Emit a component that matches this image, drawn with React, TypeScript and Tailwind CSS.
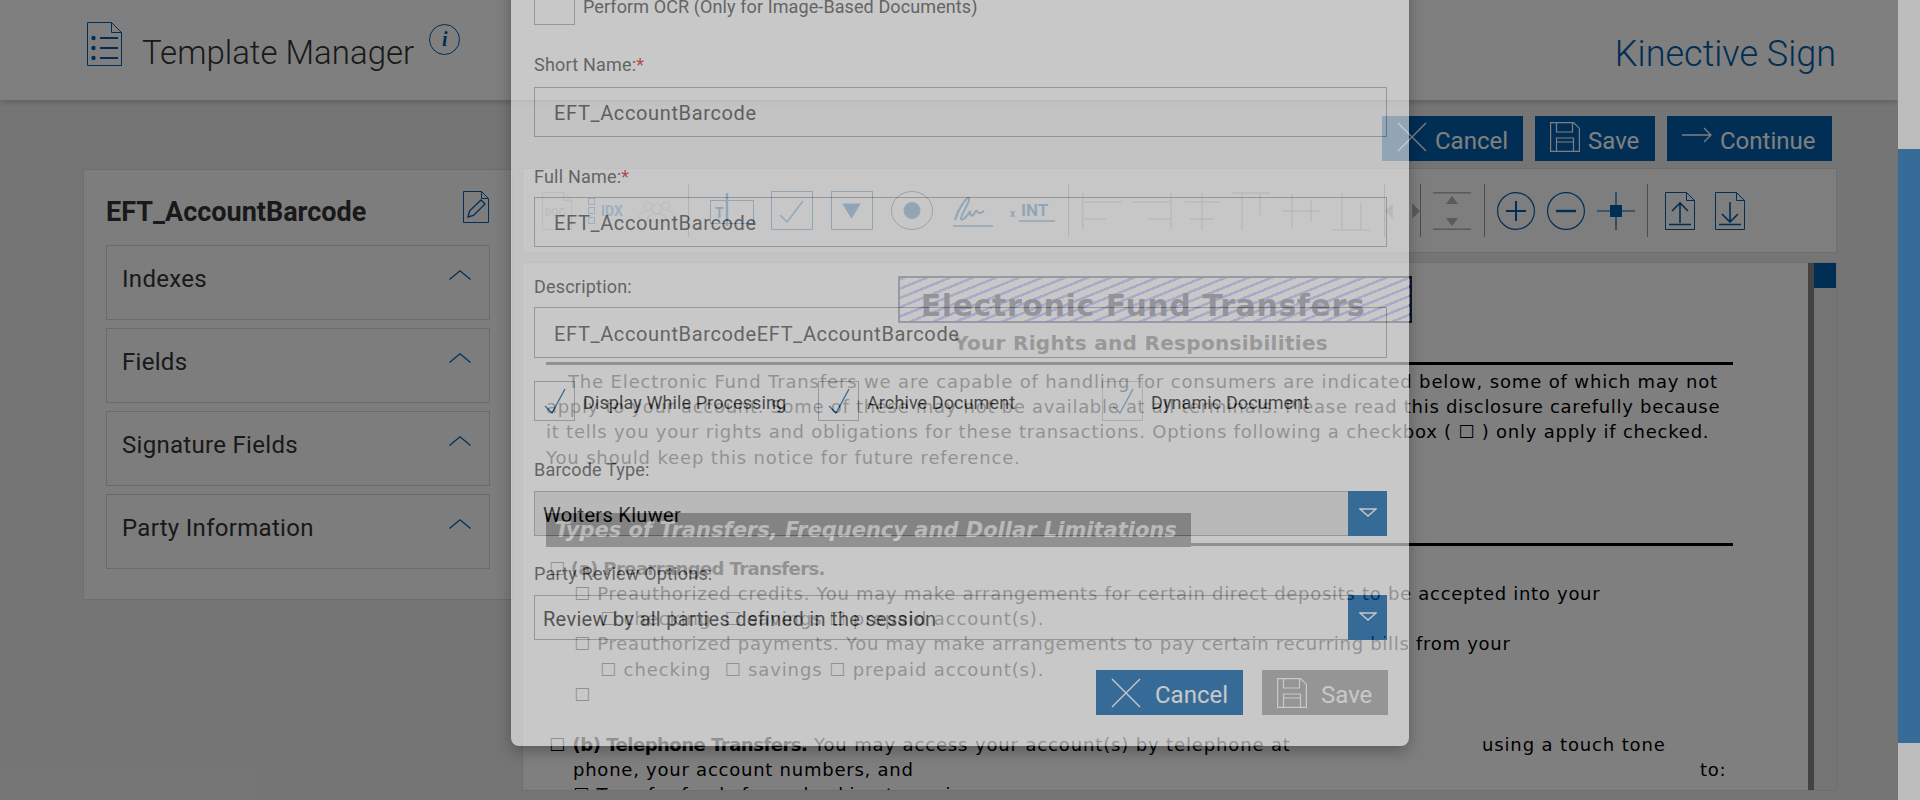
import type { ReactNode } from 'react'

const NAVY = '#005cab'

function IconX({ className }: { className?: string }) {
  return (
    <svg viewBox="0 0 30 30" className={className} fill="none" stroke="currentColor" strokeWidth="1.4">
      <path d="M1 1l28 28M29 1L1 29" />
    </svg>
  )
}

function IconSave({ className }: { className?: string }) {
  return (
    <svg viewBox="0 0 30 30" className={className} fill="none" stroke="currentColor" strokeWidth="1.2">
      <path d="M.6.6h23l5.8 5.8v23H.6z" />
      <path d="M6.5.6v9.4h16V.6M6.5 29.4V16h17v13.4M6.5 20h17" />
    </svg>
  )
}

function Chevron() {
  return (
    <svg viewBox="0 0 22 10" className="w-[22px] h-[10px]" fill="none" stroke={NAVY} strokeWidth="1.2">
      <path d="M.5 9.5L11 .8l10.5 8.7" />
    </svg>
  )
}

function Caret() {
  return (
    <svg viewBox="0 0 18 9" className="w-[18px] h-[9px] mb-[2px]" fill="none" stroke="#fff" strokeWidth="1.4">
      <path d="M1 1h16L9 8z" />
    </svg>
  )
}

function Sep() {
  return <div className="w-px h-[53px] bg-[#9a9a9a] shrink-0" />
}

function AlignIcon({ d }: { d: string }) {
  return (
    <svg viewBox="0 0 40 40" className="w-[40px] h-[40px] shrink-0" fill="none" stroke="#bdbdbd" strokeWidth="1.5">
      <path d={d} />
    </svg>
  )
}

function Toolbar() {
  return (
    <div className="h-[85px] border border-[#dcdcdc] bg-[#fdfdfd] flex items-center pl-[19px] shrink-0">
      {/* doc, index and party icons */}
      <svg viewBox="0 0 30 38" className="w-[30px] h-[38px] shrink-0" fill="none" stroke="#c9c9c9" strokeWidth="1">
        <path d="M.5.5h21l8 8v29H.5zM21.5.5v8h8" />
        <text x="3" y="24" fontSize="10" fontWeight="700" fill="#c9c9c9" stroke="none" fontFamily="Roboto">DOC</text>
      </svg>
      <svg viewBox="0 0 38 26" className="w-[38px] h-[26px] ml-[16px] shrink-0" fill="none" stroke="#3f86c8" strokeWidth="1">
        <rect x=".5" y=".5" width="6" height="6" />
        <rect x=".5" y="9.5" width="6" height="6" />
        <rect x=".5" y="19.5" width="6" height="6" />
        <text x="13" y="18" fontSize="14" fontWeight="700" fill="#3f86c8" stroke="none" fontFamily="Roboto">IDX</text>
      </svg>
      <svg viewBox="0 0 38 22" className="w-[38px] h-[22px] ml-[12px] shrink-0" fill="none" stroke="#c9c9c9" strokeWidth="1.2">
        <circle cx="10" cy="6" r="4" />
        <circle cx="28" cy="6" r="4" />
        <circle cx="19" cy="9" r="5" />
        <path d="M1 18c0-5 4-7 8-7M37 18c0-5-4-7-8-7M9 21c0-5 4-7 10-7s10 2 10 7z" />
      </svg>
      <div className="ml-[12px]"><Sep /></div>
      {/* field icons */}
      <svg viewBox="0 0 44 36" className="w-[44px] h-[36px] ml-[21px] shrink-0" fill="none" stroke={NAVY} strokeWidth="1">
        <rect x=".5" y="7.5" width="43" height="23" />
        <path d="M17 0v33" strokeWidth="2.4" />
        <text x="5" y="25" fontSize="14" fontWeight="700" fill={NAVY} stroke="none" fontFamily="Roboto">T</text>
      </svg>
      <svg viewBox="0 0 42 39" className="w-[42px] h-[39px] ml-[17px] shrink-0" fill="none" stroke={NAVY} strokeWidth="1">
        <rect x=".5" y=".5" width="41" height="38" />
        <path d="M9 24l7 7L32 10" strokeWidth="1.3" />
      </svg>
      <svg viewBox="0 0 42 39" className="w-[42px] h-[39px] ml-[18px] shrink-0" fill="none" stroke={NAVY} strokeWidth="1">
        <rect x=".5" y=".5" width="41" height="38" />
        <path d="M12 13h17l-8.500 14z" fill={NAVY} />
      </svg>
      <svg viewBox="0 0 42 39" className="w-[42px] h-[39px] ml-[18px] shrink-0" fill="none" stroke={NAVY} strokeWidth="1">
        <ellipse cx="21" cy="19.500" rx="20.500" ry="19" />
        <circle cx="21" cy="19.500" r="8" fill={NAVY} />
      </svg>
      <svg viewBox="0 0 42 32" className="w-[42px] h-[32px] ml-[19px] shrink-0" fill="none" stroke={NAVY} strokeWidth="2">
        <path d="M3 25C6 14 15 1 17 3c2 3-9 18-8 21 1 2 6-2 9-8 0 4 1 6 3 4 2-2 3-5 4-4 1 3 3 3 7 0" />
        <path d="M1 31h40" strokeWidth="1.4" />
      </svg>
      <svg viewBox="0 0 46 26" className="w-[46px] h-[26px] ml-[16px] shrink-0" fill="none">
        <text x="0" y="19" fontSize="10" fontWeight="700" fill={NAVY} fontFamily="Roboto">x</text>
        <text x="11" y="18" fontSize="17" fontWeight="700" fill={NAVY} fontFamily="Roboto">INT</text>
        <path d="M9 23h36" stroke={NAVY} strokeWidth="1.4" />
      </svg>
      <div className="ml-[12px]"><Sep /></div>
      {/* align icons */}
      <div className="ml-[13px] flex gap-[10px]">
        <AlignIcon d="M.7 2v37M3 11h37M3 28h21" />
        <AlignIcon d="M39 2v37M1 11h37M17 28h21" />
        <AlignIcon d="M20 2v37M3 11h34M8 28h24" />
        <AlignIcon d="M0 2h38M10 2v37M28 2v22" />
        <AlignIcon d="M0 20h38M10 3v34M29 9v22" />
        <AlignIcon d="M0 39h38M10 2v37M29 12v27" />
      </div>
      <div className="ml-[12px]"><Sep /></div>
      <svg viewBox="0 0 36 16" className="w-[35px] h-[16px] shrink-0" fill="#b5b5b5">
        <path d="M0 8l8-8v16zM36 8l-8-8v16z" />
      </svg>
      <Sep />
      <svg viewBox="0 0 38 38" className="w-[38px] h-[38px] ml-[12px] shrink-0" fill="#b5b5b5">
        <path d="M0 0h38v1.500H0zM0 36.500h38V38H0zM19 4l6 8H13zM19 34l6-8H13z" />
      </svg>
      <div className="ml-[13px]"><Sep /></div>
      {/* zoom icons */}
      <svg viewBox="0 0 38 38" className="w-[38px] h-[38px] ml-[12px] shrink-0" fill="none" stroke={NAVY} strokeWidth="1.2">
        <circle cx="19" cy="19" r="18.400" />
        <path d="M19 9v20M9 19h20" strokeWidth="2" />
      </svg>
      <svg viewBox="0 0 38 38" className="w-[38px] h-[38px] ml-[12px] shrink-0" fill="none" stroke={NAVY} strokeWidth="1.2">
        <circle cx="19" cy="19" r="18.400" />
        <path d="M9 19h20" strokeWidth="2.4" />
      </svg>
      <svg viewBox="0 0 38 38" className="w-[38px] h-[38px] ml-[12px] shrink-0" fill="none" stroke={NAVY} strokeWidth="1.2">
        <path d="M19 0v38M0 19h38" />
        <rect x="13" y="13" width="12" height="12" fill={NAVY} stroke="none" />
      </svg>
      <div className="ml-[12px]"><Sep /></div>
      {/* upload and download */}
      <svg viewBox="0 0 30 38" className="w-[30px] h-[38px] ml-[17px] shrink-0" fill="none" stroke={NAVY} strokeWidth="1">
        <path d="M.5.5h21l8 8v29H.5zM21.500.5v8h8" />
        <path d="M15 31V11M7 19l8-8 8 8M4 32.500h22" strokeWidth="1.600" />
      </svg>
      <svg viewBox="0 0 30 38" className="w-[30px] h-[38px] ml-[20px] shrink-0" fill="none" stroke={NAVY} strokeWidth="1">
        <path d="M.5.5h21l8 8v29H.5zM21.500.5v8h8" />
        <path d="M15 10v20M7 22l8 8 8-8M4 32.500h22" strokeWidth="1.600" />
      </svg>
    </div>
  )
}

function Line({ children, className = '' }: { children: ReactNode; className?: string }) {
  return <div className={`h-[25.200px] whitespace-nowrap ${className}`}>{children}</div>
}

function DocPage() {
  return (
    <div className="flex-1 border border-[#dcdcdc] bg-white flex min-h-0 overflow-hidden">
      <div className="flex-1 pl-[23px] pt-[13px] font-['DejaVu_Sans',sans-serif] text-[18px] leading-[25.200px] text-black overflow-hidden">
        <div className="ml-[352px] w-[514px] h-[47px] border-2 border-[#1b2c52] bg-[repeating-linear-gradient(158deg,#7070ff_0px,#7070ff_2.500px,#fff_2.500px,#fff_8.600px)] relative">
          <div className="absolute left-0 right-[24px] top-[9px] text-center text-[30px] tracking-[0.6px] leading-[38px] font-bold text-[#0a0a30]">Electronic Fund Transfers</div>
        </div>
        <div className="ml-[352px] w-[486px] mt-[6px] text-center text-[20px] tracking-[0.3px] leading-[28px] font-bold text-[#222]">Your Rights and Responsibilities</div>
        <div className="h-[3px] bg-black w-[1187px] mt-[5px] mb-[4px]" />
        <Line className="pl-[22px] tracking-[0.85px]">The Electronic Fund Transfers we are capable of handling for consumers are indicated below, some of which may not</Line>
        <Line className="tracking-[0.7px]">apply to your account. Some of these may not be available at all terminals. Please read this disclosure carefully because</Line>
        <Line className="tracking-[0.77px]">it tells you your rights and obligations for these transactions. Options following a checkbox ( ☐ ) only apply if checked.</Line>
        <Line className="tracking-[0.85px]">You should keep this notice for future reference.</Line>
        <div className="relative mt-[43px] h-[34px] w-[645px] bg-black text-white text-[21px] leading-[34px] font-bold italic pl-[9px] whitespace-nowrap">
          Types of Transfers, Frequency and Dollar Limitations
        </div>
        <div className="h-[3px] bg-black w-[1187px] mt-[-4px] mb-[10px]" />
        <Line className="pl-[3px]">☐ <b className="tracking-[-0.6px]">(a) Prearranged Transfers.</b></Line>
        <Line className="pl-[28px] tracking-[0.71px]">☐ Preauthorized credits. You may make arrangements for certain direct deposits to be accepted into your</Line>
        <Line className="pl-[54px] tracking-[0.88px]">☐ checking &nbsp;☐ savings ☐ prepaid account(s).</Line>
        <Line className="pl-[28px] tracking-[0.71px]">☐ Preauthorized payments. You may make arrangements to pay certain recurring bills from your</Line>
        <Line className="pl-[54px] tracking-[0.88px]">☐ checking &nbsp;☐ savings ☐ prepaid account(s).</Line>
        <Line className="pl-[28px]">☐</Line>
        <Line> </Line>
        <Line className="pl-[3px] flex tracking-[0.86px]">
          <span className="w-[933px] shrink-0">☐ <b className="tracking-[-0.5px]">(b) Telephone Transfers.</b> You may access your account(s) by telephone at</span>
          <span>using a touch tone</span>
        </Line>
        <Line className="pl-[27px] flex tracking-[0.76px]">
          <span className="w-[1127px] shrink-0">phone, your account numbers, and</span>
          <span>to:</span>
        </Line>
        <Line className="pl-[27px] tracking-[0.76px]">☐ Transfer funds from checking to savings</Line>
      </div>
      <div className="w-[28px] shrink-0 flex">
        <div className="w-[6px] bg-[#858585]" />
        <div className="flex-1 bg-[#ebebeb]">
          <div className="h-[25px] bg-[#005cab]" />
        </div>
      </div>
    </div>
  )
}

function Accordion({ title }: { title: string }) {
  return (
    <div className="h-[75px] border border-[#d4d4d4] pl-[15px] pr-[18px] pt-[16px] flex justify-between items-start">
      <span className="text-[24px] leading-[34px] tracking-[0.3px] text-[#333]">{title}</span>
      <span className="mt-[8px]"><Chevron /></span>
    </div>
  )
}

function TopButton({ icon, label, className }: { icon: ReactNode; label: string; className: string }) {
  return (
    <div className={`h-[45px] bg-[#005cab] text-white flex items-center text-[24px] ${className}`}>
      {icon}
      <span className="pt-[5px]">{label}</span>
    </div>
  )
}

function Page() {
  return (
    <div className="absolute inset-0 bg-[#ebebeb] flex flex-col text-[#333]">
      <div className="h-[100px] bg-white shadow-[0_2px_6px_rgba(0,0,0,0.2)] flex items-center pl-[87px] pr-[62px] relative shrink-0">
        <svg viewBox="0 0 35 44" className="w-[35px] h-[44px] mb-[12px] shrink-0" fill="none" stroke={NAVY} strokeWidth="1">
          <path d="M.5.500h24l10 10v33H.5zM24.500.500v10h10" />
          <circle cx="6.500" cy="16" r="2.200" fill={NAVY} stroke="none" />
          <circle cx="6.500" cy="26" r="2.200" fill={NAVY} stroke="none" />
          <circle cx="6.500" cy="36" r="2.200" fill={NAVY} stroke="none" />
          <path d="M13 16h18M13 26h18M13 36h18" strokeWidth="1.800" />
        </svg>
        <span className="ml-[20px] mt-[5px] text-[33px] font-light leading-none">Template Manager</span>
        <span className="ml-[15px] mb-[22px] w-[31px] h-[31px] rounded-full border border-[#005cab] flex items-center justify-center font-['Liberation_Serif',serif] italic font-bold text-[20px] text-[#005cab]">i</span>
        <span className="ml-auto mt-[7px] text-[36px] font-light text-[#005cab] leading-none">Kinective Sign</span>
      </div>

      <div className="flex justify-end gap-[12px] pr-[66px] pt-[16px] shrink-0">
        <TopButton
          className="w-[141px] pl-[15px]"
          icon={<IconX className="w-[30px] h-[30px] mr-[8px] mb-[3px] shrink-0" />}
          label="Cancel"
        />
        <TopButton
          className="w-[120px] pl-[15px]"
          icon={<IconSave className="w-[30px] h-[30px] mr-[8px] mb-[3px] shrink-0" />}
          label="Save"
        />
        <TopButton
          className="w-[165px] pl-[15px]"
          icon={
            <svg viewBox="0 0 30 16" className="w-[30px] h-[16px] mr-[8px] mb-[8px] shrink-0" fill="none" stroke="currentColor" strokeWidth="1.300">
              <path d="M0 8h29M22 1l7 7-7 7" />
            </svg>
          }
          label="Continue"
        />
      </div>

      <div className="flex flex-1 min-h-0 pl-[83px] pr-[61px] pb-[9px] pt-[7px] gap-[9px]">
        <div className="w-[430px] h-[431px] mt-[1px] border border-[#dcdcdc] bg-[#fafafa] px-[22px] shrink-0">
          <div className="flex justify-between items-start h-[75px]">
            <span className="mt-[25px] text-[27px] leading-[34px] font-bold text-[#333]">EFT_AccountBarcode</span>
            <svg viewBox="0 0 26 32" className="w-[26px] h-[32px] mt-[21px] mr-[1px]" fill="none" stroke={NAVY} strokeWidth="1">
              <path d="M.5.500h18l7 7v24H.5zM18.500.500v7h7" />
              <path d="M5 26l1.500-6L18 9l4 4L10.500 24.500z" strokeWidth="1.300" />
            </svg>
          </div>
          <div className="flex flex-col gap-[8px]">
            <Accordion title="Indexes" />
            <Accordion title="Fields" />
            <Accordion title="Signature Fields" />
            <Accordion title="Party Information" />
          </div>
        </div>
        <div className="flex-1 min-w-0 flex flex-col gap-[9px]">
          <Toolbar />
          <DocPage />
        </div>
      </div>
    </div>
  )
}

function FieldLabel({ text, required, className = '' }: { text: string; required?: boolean; className?: string }) {
  return (
    <div className={`text-[18px] leading-[28px] tracking-[0.2px] text-[#505050] ${className}`}>
      {text}
      {required && <span className="text-[#e01b24]">*</span>}
    </div>
  )
}

function TextBox({ value, className = '' }: { value: string; className?: string }) {
  return (
    <div className={`border border-[#aaa] pl-[19px] pt-[2px] flex items-center text-[20px] tracking-[0.64px] text-[#505050] ${className}`}>
      {value}
    </div>
  )
}

interface CheckProps {
  label: string
  className?: string
  checked?: boolean
  muted?: boolean
  labelClass?: string
}

function Check({ label, className = '', checked = true, muted = false, labelClass = 'text-[#222]' }: CheckProps) {
  return (
    <div className={`flex items-center ${className}`}>
      <div className={`w-[41px] h-[40px] border shrink-0 flex items-center justify-center ${muted ? 'border-[#d0d0d0]' : 'border-[#aaa]'}`}>
        {checked && (
          <svg viewBox="0 0 22 26" className="w-[22px] h-[26px]" fill="none" stroke={muted ? '#6fa3d6' : NAVY} strokeWidth="1.300">
            <path d="M1 18l7 7L21 1" />
          </svg>
        )}
      </div>
      <span className={`ml-[8px] pt-[2px] text-[18px] tracking-[0.1px] ${labelClass}`}>{label}</span>
    </div>
  )
}

function SelectBox({ value, className = '' }: { value: string; className?: string }) {
  return (
    <div className={`h-[45px] border border-[#aaa] flex items-center pl-[8px] text-[20px] ${className}`}>
      <span className="flex-1 pt-[2px] tracking-[0.3px]">{value}</span>
      <div className="w-[39px] h-[45px] -mr-px bg-[#005cab] flex items-center justify-center">
        <Caret />
      </div>
    </div>
  )
}

function Modal() {
  return (
    <div className="absolute left-[511px] top-[-15px] w-[898px] h-[761px] bg-white opacity-[0.57] rounded-b-[8px] shadow-[0_5px_15px_rgba(0,0,0,0.5)] pl-[23px] pr-[22px] font-['Roboto',sans-serif]">
      <Check label="Perform OCR (Only for Image-Based Documents)" checked={false} labelClass="text-[#505050]" />
      <FieldLabel text="Short Name:" required className="mt-[26px] mb-[8px]" />
      <TextBox value="EFT_AccountBarcode" className="h-[50px]" />
      <FieldLabel text="Full Name:" required className="mt-[26px] mb-[6px]" />
      <TextBox value="EFT_AccountBarcode" className="h-[50px]" />
      <FieldLabel text="Description:" className="mt-[26px] mb-[6px]" />
      <TextBox value="EFT_AccountBarcodeEFT_AccountBarcode" className="h-[51px]" />
      <div className="flex mt-[23px]">
        <Check label="Display While Processing" className="w-[284px]" />
        <Check label="Archive Document" className="w-[284px]" />
        <Check label="Dynamic Document" muted />
      </div>
      <FieldLabel text="Barcode Type:" className="mt-[35px] mb-[7px]" />
      <SelectBox value="Wolters Kluwer" className="bg-[#e6e6e6] text-[#000]" />
      <FieldLabel text="Party Review Options:" className="mt-[24px] mb-[7px]" />
      <SelectBox value="Review by all parties defined in the session" className="text-[#333]" />
      <div className="flex justify-end gap-[19px] mt-[30px] -mr-px text-[24px] text-white">
        <div className="w-[147px] h-[45px] bg-[#005cab] flex items-center pl-[15px]">
          <IconX className="w-[30px] h-[30px] mr-[14px] shrink-0" />
          <span className="pt-[4px]">Cancel</span>
        </div>
        <div className="w-[126px] h-[45px] bg-[#a7a7a7] flex items-center pl-[15px]">
          <IconSave className="w-[30px] h-[30px] mr-[14px] shrink-0" />
          <span className="pt-[4px]">Save</span>
        </div>
      </div>
    </div>
  )
}

export default function App() {
  return (
    <div className="relative w-[1920px] h-[800px] overflow-hidden flex font-['Roboto',sans-serif]">
      <div className="relative w-[1898px] h-full overflow-hidden">
        <Page />
        {/* Dimmed backdrop */}
        <div className="absolute inset-0 bg-black/50" />
        <Modal />
      </div>
      {/* Page scrollbar */}
      <div className="w-[22px] h-full bg-[#bcbcbc] pt-[149px]">
        <div className="h-[594px] bg-[#376c99]" />
      </div>
    </div>
  )
}
